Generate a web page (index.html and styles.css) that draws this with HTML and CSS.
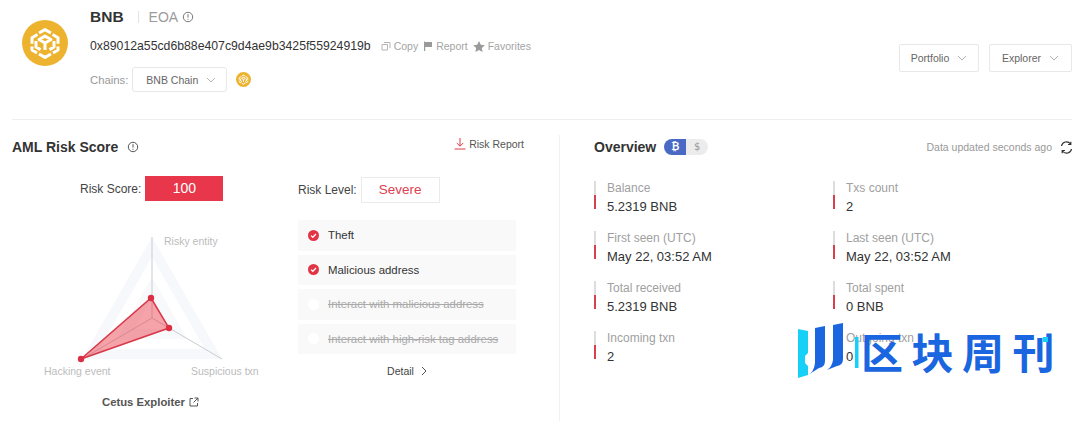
FILE: index.html
```html
<!DOCTYPE html>
<html lang="en">
<head>
    <meta charset="UTF-8">
    <title>AML Risk Score</title>
    <link rel="stylesheet" href="styles.css">
</head>
<body>
    <svg class="defs" width="0" height="0">
        <symbol id="bnb" viewBox="0 0 46 46">
            <circle cx="23" cy="23" r="23" fill="#edb32f"/>
            <g fill="none" stroke="#fff" stroke-width="3" stroke-linejoin="round">
                <path d="M17 13l6-3.400 6 3.400M30.500 14.500l5.500 3.200v6M10 23.700v-6l5.500-3.200"/>
                <path d="M17 19.500l6-3.400 6 3.400-6 3.500zM23 23v7"/>
                <path d="M10 26.500v3.500l5 3M36 26.500v3.500l-5 3M17 34l6 3.400 6-3.400"/>
                <path d="M14 21v6l4.500 2.600M32 21v6l-4.500 2.600"/>
            </g>
        </symbol>
        <symbol id="info" viewBox="0 0 12 12">
            <circle cx="6" cy="6" r="4.700" fill="none" stroke="currentColor"/>
            <path d="M6 3.200v3.400M6 7.800v1" stroke="currentColor" fill="none"/>
        </symbol>
        <symbol id="chev" viewBox="0 0 10 6">
            <path d="M1 1l4 4 4-4" fill="none" stroke="currentColor"/>
        </symbol>
    </svg>

    <header class="header">
        <svg class="avatar"><use href="#bnb"/></svg>
        <div class="identity">
            <div class="name-row">
                <span class="name">BNB</span>
                <span class="name-sep"></span>
                <span class="eoa">EOA</span>
                <svg class="icon-info"><use href="#info"/></svg>
            </div>
            <div class="address-row">
                <span class="address">0x89012a55cd6b88e407c9d4ae9b3425f55924919b</span>
                <span class="action">
                    <svg width="10" height="10" viewBox="0 0 10 10"><path d="M3 1.500h6v5.500M1 3.500h5.500v5.500H1z" fill="none" stroke="#b5b5b5"/></svg>
                    Copy
                </span>
                <span class="action">
                    <svg width="10" height="10" viewBox="0 0 10 10"><path d="M1 0v10h1.200V6H9V1H2z" fill="#9a9a9a"/></svg>
                    Report
                </span>
                <span class="action">
                    <svg width="12" height="11" viewBox="0 0 12 11"><path d="M6 0l1.800 3.700 4 .5-3 2.800.8 4L6 9 2.400 11l.8-4-3-2.800 4-.5z" fill="#9a9a9a"/></svg>
                    Favorites
                </span>
            </div>
            <div class="chain-row">
                <span class="chain-label">Chains:</span>
                <span class="chain-select">BNB Chain <svg class="chev"><use href="#chev"/></svg></span>
                <svg class="chain-icon"><use href="#bnb"/></svg>
            </div>
        </div>
        <div class="header-btns">
            <span class="btn btn-portfolio">Portfolio <svg class="chev"><use href="#chev"/></svg></span>
            <span class="btn btn-explorer">Explorer <svg class="chev"><use href="#chev"/></svg></span>
        </div>
    </header>

    <main class="main">
        <section class="risk">
            <div class="risk-head">
                <h2 class="title">AML Risk Score</h2>
                <svg class="icon-info title-info"><use href="#info"/></svg>
                <span class="risk-report">
                    <svg width="12" height="12" viewBox="0 0 12 12"><path d="M6 0v8M2.800 5L6 8.200 9.200 5M.5 11h11" fill="none" stroke="#dc3c4a"/></svg>
                    Risk Report
                </span>
            </div>
            <div class="risk-body">
                <div class="chart-col">
                    <div class="score-row">
                        <span class="score-label">Risk Score:</span>
                        <span class="score-box">100</span>
                    </div>
                    <svg class="radar" width="280" height="156" viewBox="0 230 280 156">
                        <path d="M152 237L222 359H82z" fill="#f7f8fb"/>
                        <path d="M152 257L205 349H99z" fill="#fff"/>
                        <path d="M152 277L187 339H117z" fill="#f8f9fb"/>
                        <path d="M152 298L170 329H134z" fill="#fff"/>
                        <path d="M152 237V318M152 318L222 359M152 318L82 359" stroke="#c9cbd0" fill="none"/>
                        <path d="M151 298L169 328L81 359z" fill="#ea3f4c" fill-opacity=".48" stroke="#d8384a" stroke-width="1.500"/>
                        <circle cx="151" cy="298" r="3.200" fill="#dc2f43"/>
                        <circle cx="169" cy="328" r="3.200" fill="#dc2f43"/>
                        <circle cx="81" cy="359" r="3.200" fill="#dc2f43"/>
                        <text class="radar-label" x="164" y="245">Risky entity</text>
                        <text class="radar-label" x="44" y="375">Hacking event</text>
                        <text class="radar-label" x="191" y="375">Suspicious txn</text>
                    </svg>
                    <div class="exploiter">
                        Cetus Exploiter
                        <svg width="10" height="10" viewBox="0 0 10 10"><path d="M4 1.500H1v7.500h7.500V6M5.500 1h3.500v3.500M9 1L4.500 5.500" fill="none" stroke="#555"/></svg>
                    </div>
                </div>
                <div class="level-col">
                    <div class="level-row">
                        <span class="score-label">Risk Level:</span>
                        <span class="level-box">Severe</span>
                    </div>
                    <ul class="flags">
                        <li class="flag on"><svg width="11" height="11" viewBox="0 0 11 11"><circle cx="5.500" cy="5.500" r="5.500" fill="#e23445"/><path d="M3 5.600l1.800 1.700L8 4" fill="none" stroke="#fff" stroke-width="1.300"/></svg>Theft</li>
                        <li class="flag on"><svg width="11" height="11" viewBox="0 0 11 11"><circle cx="5.500" cy="5.500" r="5.500" fill="#e23445"/><path d="M3 5.600l1.800 1.700L8 4" fill="none" stroke="#fff" stroke-width="1.300"/></svg>Malicious address</li>
                        <li class="flag off"><svg width="11" height="11" viewBox="0 0 11 11"><circle cx="5.500" cy="5.500" r="5.500" fill="#fff"/></svg><s>Interact with malicious address</s></li>
                        <li class="flag off"><svg width="11" height="11" viewBox="0 0 11 11"><circle cx="5.500" cy="5.500" r="5.500" fill="#fff"/></svg><s>Interact with high-risk tag address</s></li>
                    </ul>
                    <div class="detail">Detail <svg width="6" height="10" viewBox="0 0 6 10"><path d="M1 1l4 4-4 4" fill="none" stroke="#555"/></svg></div>
                </div>
            </div>
        </section>

        <section class="overview">
            <div class="overview-head">
                <h2 class="title">Overview</h2>
                <div class="toggle"><span class="toggle-on">₿</span><span class="toggle-off">$</span></div>
                <span class="updated">Data updated seconds ago</span>
                <svg class="refresh" width="13" height="13" viewBox="0 0 13 13"><path d="M1.500 5A5 5 0 0 1 10.500 3M11.500 8A5 5 0 0 1 2.500 10M10.800 .8v2.700H8M2.200 12.200V9.500H5" fill="none" stroke="#333" stroke-width="1.200"/></svg>
            </div>
            <div class="stats">
                <div class="stat"><div class="stat-label">Balance</div><div class="stat-value">5.2319 BNB</div></div>
                <div class="stat"><div class="stat-label">Txs count</div><div class="stat-value">2</div></div>
                <div class="stat"><div class="stat-label">First seen (UTC)</div><div class="stat-value">May 22, 03:52 AM</div></div>
                <div class="stat"><div class="stat-label">Last seen (UTC)</div><div class="stat-value">May 22, 03:52 AM</div></div>
                <div class="stat"><div class="stat-label">Total received</div><div class="stat-value">5.2319 BNB</div></div>
                <div class="stat"><div class="stat-label">Total spent</div><div class="stat-value">0 BNB</div></div>
                <div class="stat"><div class="stat-label">Incoming txn</div><div class="stat-value">2</div></div>
                <div class="stat"><div class="stat-label">Outgoing txn</div><div class="stat-value">0</div></div>
            </div>
        </section>
    </main>

    <div class="watermark">
        <svg width="62" height="56" viewBox="0 0 62 56">
            <path d="M0 6l10 2v22l-3 3v7l3 3v9L0 55z" fill="#16d0f7"/>
            <path d="M17 5l10-2v35q0 6-6 7L10 52q6-3 7-12z" fill="#1a66e0"/>
            <path d="M35 2l10-2v36q0 6-6 7L29 47q5-3 6-10z" fill="#1a66e0"/>
            <rect x="57" y="14" width="3.500" height="31" fill="#16d0f7"/>
        </svg>
        <span class="wm-text">区块周刊</span>
    </div>
</body>
</html>
```

FILE: styles.css
```css
* {
    box-sizing: border-box;
}
html, body {
    height: 421px;
    overflow: hidden;
}
body {
    margin: 0;
    position: relative;
    background-color: #ffffff;
    font-family: "Liberation Sans", Arial, sans-serif;
    color: #333333;
}
.defs {
    position: absolute;
}

/* header */
.header {
    display: flex;
    height: 120px;
    margin: 0 8px 0 12px;
    padding-top: 7px;
    border-bottom: 1px solid #efefef;
}
.avatar {
    width: 46px;
    height: 46px;
    margin: 13px 0 0 10px;
}
.identity {
    margin-left: 22px;
    flex: 1;
}
.name-row {
    display: flex;
    align-items: center;
    height: 20px;
}
.name {
    font-size: 15.5px;
    font-weight: bold;
    color: #333333;
}
.name-sep {
    width: 1px;
    height: 12px;
    margin: 0 10px 0 14px;
    background-color: #e3e3e3;
}
.eoa {
    font-size: 14px;
    color: #9b9b9b;
}
.icon-info {
    width: 12px;
    height: 12px;
    margin-left: 4px;
    color: #777777;
}
.address-row {
    display: flex;
    align-items: center;
    height: 20px;
    margin-top: 9px;
}
.address {
    font-size: 12.25px;
    color: #333333;
    margin-right: 10px;
}
.action {
    display: flex;
    align-items: center;
    gap: 3px;
    margin-right: 5px;
    font-size: 10.5px;
    color: #a4a4a4;
}
.chain-row {
    display: flex;
    align-items: center;
    height: 25px;
    margin-top: 11px;
}
.chain-label {
    font-size: 11.3px;
    color: #999999;
    margin-right: 4px;
}
.chain-select {
    display: flex;
    align-items: center;
    justify-content: space-between;
    width: 95px;
    height: 25px;
    padding: 0 10px 0 13px;
    border: 1px solid #e8e8e8;
    border-radius: 3px;
    font-size: 10.5px;
    color: #666666;
}
.chev {
    width: 10px;
    height: 6px;
    color: #b4b4b4;
}
.chain-icon {
    width: 15px;
    height: 15px;
    margin-left: 9px;
}
.header-btns {
    display: flex;
    gap: 10px;
    margin-top: 37px;
}
.btn {
    display: flex;
    align-items: center;
    justify-content: center;
    gap: 8px;
    height: 28px;
    border: 1px solid #e8e8e8;
    border-radius: 2px;
    font-size: 10.5px;
    color: #666666;
}
.btn-portfolio {
    width: 80px;
}
.btn-explorer {
    width: 83px;
}

/* panels */
.main {
    display: flex;
    padding-left: 12px;
}
.risk {
    width: 548px;
    height: 292px;
    margin-top: 15px;
    border-right: 1px solid #f1f1f1;
}
.risk-head {
    display: flex;
    align-items: center;
    width: 512px;
    height: 24px;
}
.title {
    margin: 0;
    font-size: 14px;
    font-weight: bold;
    color: #333333;
}
.title-info {
    margin-left: 9px;
    color: #555555;
}
.risk-report {
    display: flex;
    align-items: center;
    gap: 3px;
    margin: -6px 0 0 auto;
    font-size: 10.5px;
    color: #555555;
}
.risk-body {
    display: flex;
    margin-top: 17px;
}
.chart-col {
    width: 298px;
    margin-left: -12px;
}
.score-row {
    display: flex;
    align-items: center;
    height: 25px;
    margin-left: 80px;
}
.score-label {
    font-size: 12px;
    color: #444444;
}
.score-box {
    width: 78px;
    height: 25px;
    margin-left: 4px;
    background-color: #e8374a;
    color: #ffffff;
    font-size: 14px;
    line-height: 25px;
    text-align: center;
}
.radar {
    display: block;
    margin-top: 29px;
}
.radar-label {
    font-size: 10.5px;
    fill: #bcbcbc;
}
.exploiter {
    display: flex;
    align-items: center;
    gap: 4px;
    margin: 10px 0 0 102px;
    font-size: 11.3px;
    font-weight: bold;
    color: #555555;
}
.level-col {
    width: 218px;
}
.level-row {
    display: flex;
    align-items: center;
    height: 26px;
    margin-top: 1px;
}
.level-box {
    width: 79px;
    height: 26px;
    margin-left: 4px;
    border: 1px solid #ebebeb;
    color: #df4150;
    font-size: 13.5px;
    line-height: 24px;
    text-align: center;
}
.flags {
    list-style: none;
    margin: 17px 0 0;
    padding: 0;
}
.flag {
    display: flex;
    align-items: center;
    gap: 9px;
    height: 30.500px;
    margin-bottom: 4px;
    padding-left: 10px;
    background-color: #f9f9f9;
    font-size: 11.4px;
    color: #333333;
}
.flag.off {
    color: #aaaaaa;
}
.detail {
    display: flex;
    align-items: center;
    justify-content: center;
    gap: 7px;
    margin-top: 11px;
    font-size: 10.5px;
    color: #444444;
}

/* overview */
.overview {
    width: 479px;
    margin: 15px 0 0 34px;
}
.overview-head {
    display: flex;
    align-items: center;
    height: 24px;
}
.toggle {
    display: flex;
    margin-left: 8px;
    height: 16px;
    font-size: 10px;
    line-height: 16px;
    text-align: center;
    font-family: "DejaVu Sans", sans-serif;
}
.toggle-on {
    width: 22px;
    border-radius: 8px 0 0 8px;
    background-color: #4a69c4;
    color: #ffffff;
    font-weight: bold;
}
.toggle-off {
    width: 22px;
    border-radius: 0 8px 8px 0;
    background-color: #ececec;
    color: #999999;
}
.updated {
    margin-left: auto;
    font-size: 10.5px;
    color: #999999;
}
.refresh {
    margin-left: 8px;
}
.stats {
    display: grid;
    grid-template-columns: 239px 240px;
    grid-auto-rows: 50px;
    margin-top: 20px;
}
.stat {
    position: relative;
    padding-left: 13px;
}
.stat::before {
    content: "";
    position: absolute;
    left: 0;
    top: 2px;
    width: 2px;
    height: 28px;
    background: linear-gradient(#dddddd 50%, #d9404e 50%);
}
.stat-label {
    height: 18px;
    font-size: 12px;
    line-height: 18px;
    color: #a0a0a0;
}
.stat-value {
    height: 18px;
    font-size: 13px;
    line-height: 19px;
    color: #333333;
}

/* site watermark on top of the shot */
.watermark {
    position: absolute;
    left: 798px;
    top: 323px;
    display: flex;
    align-items: center;
}
.wm-text {
    position: relative;
    margin-left: 1px;
    font-family: "Noto Sans CJK SC", sans-serif;
    font-size: 42px;
    line-height: 56px;
    letter-spacing: 8.500px;
    font-weight: bold;
    color: #1a66e0;
}
.wm-text::after {
    content: "";
    position: absolute;
    right: 15px;
    top: 14px;
    width: 5px;
    height: 5px;
    background-color: #16d0f7;
}
```
